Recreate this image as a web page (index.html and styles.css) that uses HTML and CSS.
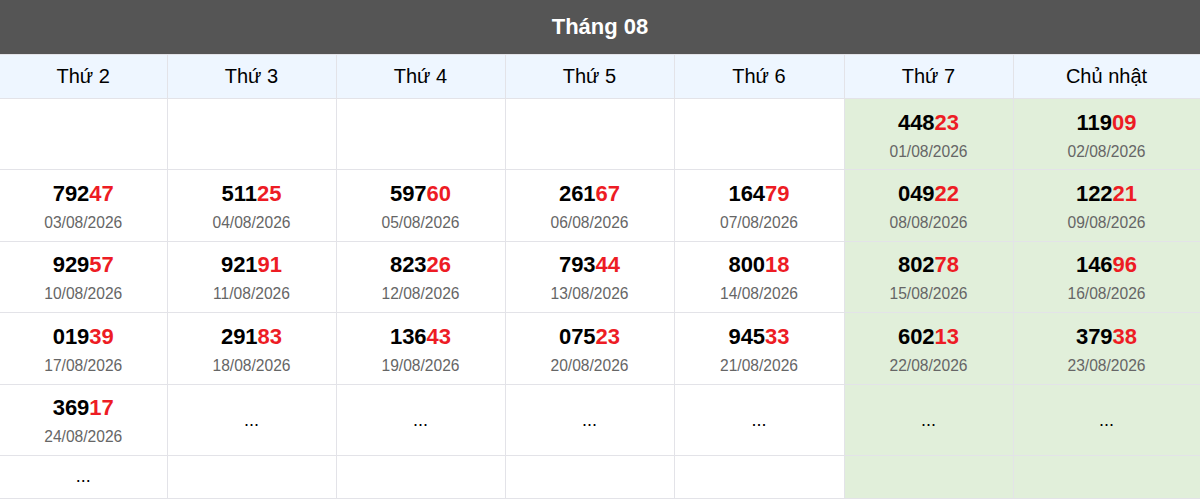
FILE: index.html
```html
<!DOCTYPE html>
<html lang="vi">
<head>
<meta charset="utf-8">
<link rel="stylesheet" href="styles.css">
</head>
<body>
<div class="title">Tháng 08</div>
<table class="cal">
<colgroup><col class="c1"><col class="c"><col class="c"><col class="c"><col class="c6"><col class="c"><col class="c7"></colgroup>
<thead>
<tr><th>Thứ 2</th><th>Thứ 3</th><th>Thứ 4</th><th>Thứ 5</th><th>Thứ 6</th><th>Thứ 7</th><th>Chủ nhật</th></tr>
</thead>
<tbody>
<tr class="r">
<td></td><td></td><td></td><td></td><td></td>
<td class="we"><div class="num">448<span class="red">23</span></div><div class="date">01/08/2026</div></td>
<td class="we"><div class="num">119<span class="red">09</span></div><div class="date">02/08/2026</div></td>
</tr>
<tr class="r">
<td><div class="num">792<span class="red">47</span></div><div class="date">03/08/2026</div></td>
<td><div class="num">511<span class="red">25</span></div><div class="date">04/08/2026</div></td>
<td><div class="num">597<span class="red">60</span></div><div class="date">05/08/2026</div></td>
<td><div class="num">261<span class="red">67</span></div><div class="date">06/08/2026</div></td>
<td><div class="num">164<span class="red">79</span></div><div class="date">07/08/2026</div></td>
<td class="we"><div class="num">049<span class="red">22</span></div><div class="date">08/08/2026</div></td>
<td class="we"><div class="num">122<span class="red">21</span></div><div class="date">09/08/2026</div></td>
</tr>
<tr class="r">
<td><div class="num">929<span class="red">57</span></div><div class="date">10/08/2026</div></td>
<td><div class="num">921<span class="red">91</span></div><div class="date">11/08/2026</div></td>
<td><div class="num">823<span class="red">26</span></div><div class="date">12/08/2026</div></td>
<td><div class="num">793<span class="red">44</span></div><div class="date">13/08/2026</div></td>
<td><div class="num">800<span class="red">18</span></div><div class="date">14/08/2026</div></td>
<td class="we"><div class="num">802<span class="red">78</span></div><div class="date">15/08/2026</div></td>
<td class="we"><div class="num">146<span class="red">96</span></div><div class="date">16/08/2026</div></td>
</tr>
<tr class="r">
<td><div class="num">019<span class="red">39</span></div><div class="date">17/08/2026</div></td>
<td><div class="num">291<span class="red">83</span></div><div class="date">18/08/2026</div></td>
<td><div class="num">136<span class="red">43</span></div><div class="date">19/08/2026</div></td>
<td><div class="num">075<span class="red">23</span></div><div class="date">20/08/2026</div></td>
<td><div class="num">945<span class="red">33</span></div><div class="date">21/08/2026</div></td>
<td class="we"><div class="num">602<span class="red">13</span></div><div class="date">22/08/2026</div></td>
<td class="we"><div class="num">379<span class="red">38</span></div><div class="date">23/08/2026</div></td>
</tr>
<tr class="r">
<td><div class="num">369<span class="red">17</span></div><div class="date">24/08/2026</div></td>
<td class="dots">...</td><td class="dots">...</td><td class="dots">...</td><td class="dots">...</td>
<td class="we dots">...</td><td class="we dots">...</td>
</tr>
<tr class="last">
<td class="dots">...</td><td></td><td></td><td></td><td></td><td class="we"></td><td class="we"></td>
</tr>
</tbody>
</table>
</body>
</html>
```
FILE: styles.css
```css
html, body {
  margin: 0;
  padding: 0;
  background: #fff;
  font-family: "Liberation Sans", Arial, sans-serif;
  color: #000;
}
.title {
  height: 54px;
  background: #555555;
  color: #fff;
  font-size: 22px;
  font-weight: bold;
  display: flex;
  align-items: center;
  justify-content: center;
}
.cal {
  width: 1200px;
  border-collapse: collapse;
  table-layout: fixed;
}
.cal .c1 { width: 167px; }
.cal .c { width: 169px; }
.cal .c6 { width: 170px; }
.cal .c7 { width: 187px; }
.cal th, .cal td {
  border: 1px solid #e3e3e8;
  text-align: center;
  padding: 0;
}
.cal tr > :first-child { border-left: none; }
.cal th {
  background: #eef6ff;
  font-weight: normal;
  font-size: 20px;
  height: 43px;
}
.cal .r td { height: 68.4px; padding-top: 2px; }
.cal .last td { height: 42px; }
.cal td.we { background: #e1efda; }
.num {
  font-size: 22px;
  font-weight: bold;
  line-height: 26px;
}
.red { color: #ed1c24; }
.date {
  font-size: 15.6px;
  color: #666;
  line-height: 18px;
  margin-top: 7px;
}
.dots {
  font-size: 18px;
}
```
